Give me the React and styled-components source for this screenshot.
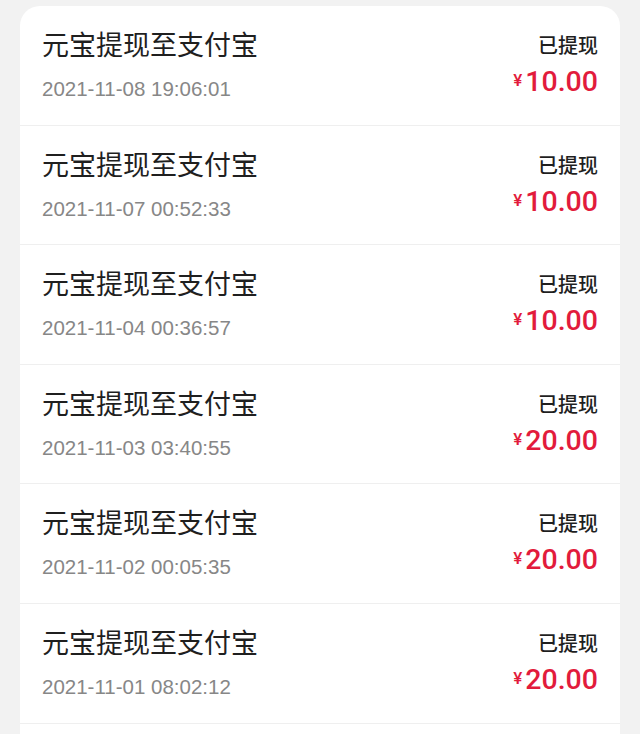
import React from 'react';
import styled, { createGlobalStyle } from 'styled-components';

const records = [
	{ time: '2021-11-08 19:06:01', amount: '10.00' },
	{ time: '2021-11-07 00:52:33', amount: '10.00' },
	{ time: '2021-11-04 00:36:57', amount: '10.00' },
	{ time: '2021-11-03 03:40:55', amount: '20.00' },
	{ time: '2021-11-02 00:05:35', amount: '20.00' },
	{ time: '2021-11-01 08:02:12', amount: '20.00' },
];

const GlobalStyle = createGlobalStyle`
	html, body {
		margin: 0;
		background: #f2f2f2;
	}
	body {
		font-family: 'Liberation Sans', 'Noto Sans CJK SC', sans-serif;
		-webkit-font-smoothing: antialiased;
	}
`;

function RecordRow({ time, amount }) {
	return (
		<Row>
			<Info>
				<Title>元宝提现至支付宝</Title>
				<Time>{time}</Time>
			</Info>
			<Side>
				<Status>已提现</Status>
				<Amount>
					<Currency>¥</Currency>
					{amount}
				</Amount>
			</Side>
		</Row>
	);
}

export default function App() {
	return (
		<>
			<GlobalStyle />
			<Page>
				<Card>
					{records.map((r) => (
						<RecordRow key={r.time} time={r.time} amount={r.amount} />
					))}
				</Card>
			</Page>
		</>
	);
}

const Page = styled.div`
	padding: 6px 20px 0;
`;

const Card = styled.div`
	background: #fff;
	border-radius: 20px 20px 0 0;
	overflow: hidden;
	padding-bottom: 20px;
`;

const Row = styled.div`
	box-sizing: border-box;
	height: 119.6px;
	display: flex;
	justify-content: space-between;
	align-items: flex-start;
	padding: 0 22px;
	border-bottom: 1px solid #efefef;
`;

const Info = styled.div`
	display: flex;
	flex-direction: column;
	padding-top: 22px;
`;

const Title = styled.div`
	font-family: 'Noto Sans CJK SC', sans-serif;
	font-size: 27px;
	line-height: 32px;
	color: #1f1f1f;
`;

const Time = styled.div`
	margin-top: 17px;
	font-family: 'Liberation Sans', sans-serif;
	font-size: 20.5px;
	line-height: 24px;
	color: #878787;
`;

const Side = styled.div`
	display: flex;
	flex-direction: column;
	align-items: flex-end;
	padding-top: 27px;
`;

const Status = styled.div`
	font-family: 'Noto Sans CJK SC', sans-serif;
	font-size: 20px;
	font-weight: 500;
	line-height: 24px;
	color: #1f1f1f;
`;

const Amount = styled.div`
	margin-top: 9px;
	display: flex;
	align-items: flex-start;
	font-family: Roboto, 'Liberation Sans', sans-serif;
	font-size: 28.5px;
	font-weight: 500;
	line-height: 32px;
	color: #e21b3c;
`;

const Currency = styled.span`
	font-size: 17px;
	line-height: 17px;
	margin-top: 6px;
	margin-right: 3px;
`;
